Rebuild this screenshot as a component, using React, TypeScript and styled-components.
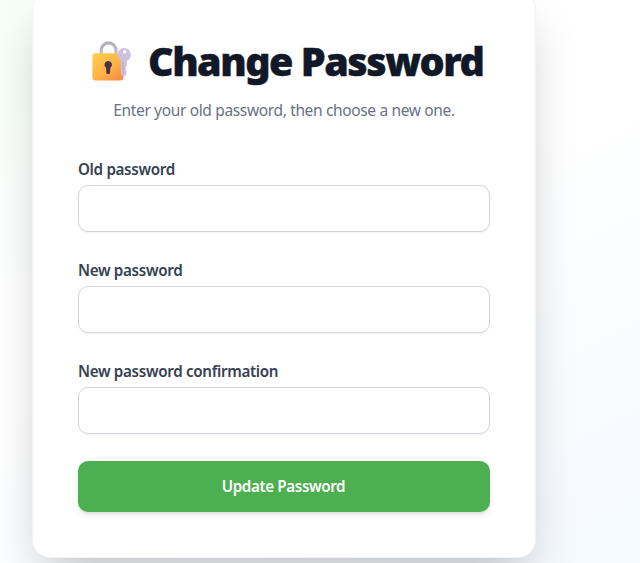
import React, { useId } from 'react';
import styled, { createGlobalStyle } from 'styled-components';

const GlobalStyle = createGlobalStyle`
  *, *::before, *::after { box-sizing: border-box; }
  html, body { margin: 0; padding: 0; overflow: hidden; }
  body { font-family: "Noto Sans", "Open Sans", sans-serif; }
`;

const Page = styled.main`
  height: 563px;
  overflow: hidden;
  padding-left: 32px;
  background: linear-gradient(152deg, #f5fff9 0%, #ffffff 36%, #ffffff 46%, #f5faff 95%);
`;

const Card = styled.section`
  width: 504px;
  height: 567px;
  margin-top: -9px;
  padding: 41px 45px 45px;
  background: #fff;
  border: 1px solid #f3f4f6;
  border-radius: 18px;
  box-shadow: 0 25px 50px -12px rgba(0, 0, 0, 0.25);
`;

const Header = styled.header`
  height: 126px;
  text-align: center;
`;

const Title = styled.h1`
  display: flex;
  align-items: center;
  margin: 0;
  padding-left: 11px;
  height: 56px;
  color: #111827;
  font-size: 39.5px;
  line-height: 56px;
  font-weight: 900;
  letter-spacing: -1.5px;
  -webkit-text-stroke: 0.4px #111827;
  white-space: nowrap;

  svg {
    flex: none;
    margin-right: 15px;
  }
`;

const Subtitle = styled.p`
  margin: 8px 0 0;
  color: #6b7280;
  font-size: 15.5px;
  line-height: 26px;
  letter-spacing: -0.35px;
  white-space: nowrap;
`;

const Form = styled.form`
  display: flex;
  flex-direction: column;
`;

const Field = styled.div`
  height: 101px;
`;

const Label = styled.label`
  display: block;
  height: 26px;
  color: #374151;
  font-size: 15.2px;
  line-height: 20px;
  font-weight: 600;
  letter-spacing: -0.33px;
`;

const Input = styled.input`
  display: block;
  width: 100%;
  height: 47px;
  padding: 12px 16px;
  border: 1px solid #d1d5db;
  border-radius: 10px;
  outline: none;
  background: #fff;
  font: inherit;
  box-shadow: 0 1px 2px rgba(0, 0, 0, 0.05);
`;

const SubmitButton = styled.button`
  height: 51px;
  margin-top: -1px;
  padding: 0 1px 1px 0;
  border: 0;
  border-radius: 10px;
  background: #4caf50;
  color: #fff;
  font: 600 15.2px/24px "Noto Sans", "Open Sans", sans-serif;
  letter-spacing: -0.38px;
  box-shadow: 0 4px 6px -1px rgba(0, 0, 0, 0.1), 0 2px 4px -2px rgba(0, 0, 0, 0.1);
`;

function LockWithKey() {
  const id = useId();
  return (
    <svg width="44" height="44" viewBox="0 0 44 44" aria-hidden="true">
      <defs>
        <linearGradient id={`${id}b`} x1="0.1" y1="0" x2="0.9" y2="1">
          <stop offset="0" stopColor="#ffcd50" />
          <stop offset="0.55" stopColor="#feb344" />
          <stop offset="1" stopColor="#f58a4b" />
        </linearGradient>
        <linearGradient id={`${id}s`} x1="0" y1="0" x2="0" y2="1">
          <stop offset="0" stopColor="#b5afb9" />
          <stop offset="1" stopColor="#c9c0cf" />
        </linearGradient>
      </defs>
      <path d="M12.2 18v-6.7a7.4 7.4 0 0 1 14.8 0V18" fill="none" stroke={`url(#${id}s)`} strokeWidth="3.2" />
      <rect x="3.4" y="14.2" width="31" height="27.2" rx="3.2" fill={`url(#${id}b)`} />
      <path
        d="M19.2 21.9a3.7 3.7 0 0 0-2.1 6.8l.2 4.6a1.9 1.9 0 0 0 3.8 0l.2-4.6a3.7 3.7 0 0 0-2.1-6.8z"
        fill="#4a3048"
      />
      <path
        fillRule="evenodd"
        d="M35.4 9a6.8 6.8 0 0 0-3.5 12.6v13.7l2.7 2.6 2.9-2.9v-3l-1.2-1.2 1.4-1.5-1.3-1.4 1.7-1.7v-4.4a6.8 6.8 0 0 0-2.7-12.8zM35.6 10.9a1.8 1.8 0 1 1 0 3.6 1.8 1.8 0 0 1 0-3.6z"
        fill="#cdc1dc"
      />
      <path d="M34.2 22.5v12.8" stroke="#b5a5c6" strokeWidth="1" />
    </svg>
  );
}

const fields = [
  { id: 'old-password', label: 'Old password' },
  { id: 'new-password', label: 'New password' },
  { id: 'confirm-password', label: 'New password confirmation' },
];

export default function App() {
  return (
    <>
      <GlobalStyle />
      <Page>
        <Card>
          <Header>
            <Title>
              <LockWithKey />
              Change Password
            </Title>
            <Subtitle>Enter your old password, then choose a new one.</Subtitle>
          </Header>
          <Form>
            {fields.map((field) => (
              <Field key={field.id}>
                <Label htmlFor={field.id}>{field.label}</Label>
                <Input id={field.id} type="password" />
              </Field>
            ))}
            <SubmitButton type="button">Update Password</SubmitButton>
          </Form>
        </Card>
      </Page>
    </>
  );
}
